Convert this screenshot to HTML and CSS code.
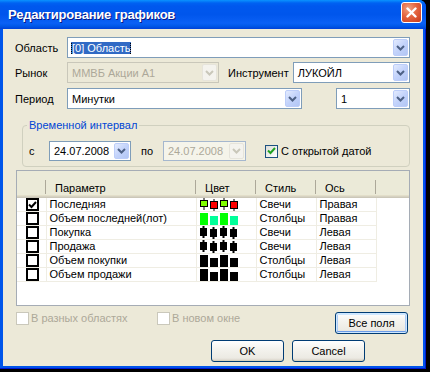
FILE: index.html
```html
<!DOCTYPE html>
<html lang="ru">
<head>
<meta charset="utf-8">
<title>Редактирование графиков</title>
<link rel="stylesheet" href="styles.css">
</head>
<body>
<div class="window">
<div class="titlebar">
<span class="title">Редактирование графиков</span>
<span class="close"><svg width="11" height="11" viewBox="0 0 11 11"><path d="M1.5 1.5l8 8M9.5 1.5l-8 8" stroke="#fff" stroke-width="2.4" stroke-linecap="round"/></svg></span>
</div>
<div class="client">

<div class="row r1">
<span class="lbl">Область</span>
<div class="combo grow"><span class="val"><span class="sel">[0] Область</span></span><span class="drop"><svg width="9" height="6" viewBox="0 0 9 6"><path d="M1 1l3.5 3.5L8 1" fill="none" stroke="#4d6185" stroke-width="2"/></svg></span></div>
</div>

<div class="row r2">
<span class="lbl">Рынок</span>
<div class="combo off w-market"><span class="val">ММВБ Акции А1</span><span class="drop"><svg width="9" height="6" viewBox="0 0 9 6"><path d="M1 1l3.5 3.5L8 1" fill="none" stroke="#c9c7ba" stroke-width="2"/></svg></span></div>
<span class="lbl2">Инструмент</span>
<div class="combo grow"><span class="val">ЛУКОЙЛ</span><span class="drop"><svg width="9" height="6" viewBox="0 0 9 6"><path d="M1 1l3.5 3.5L8 1" fill="none" stroke="#4d6185" stroke-width="2"/></svg></span></div>
</div>

<div class="row r3">
<span class="lbl">Период</span>
<div class="combo w-period"><span class="val">Минутки</span><span class="drop"><svg width="9" height="6" viewBox="0 0 9 6"><path d="M1 1l3.5 3.5L8 1" fill="none" stroke="#4d6185" stroke-width="2"/></svg></span></div>
<div class="combo w-num"><span class="val">1</span><span class="drop"><svg width="9" height="6" viewBox="0 0 9 6"><path d="M1 1l3.5 3.5L8 1" fill="none" stroke="#4d6185" stroke-width="2"/></svg></span></div>
</div>

<fieldset class="group">
<legend>Временной интервал</legend>
<div class="row dates">
<span class="from">с</span>
<div class="combo date"><span class="val">24.07.2008</span><span class="drop"><svg width="9" height="6" viewBox="0 0 9 6"><path d="M1 1l3.5 3.5L8 1" fill="none" stroke="#4d6185" stroke-width="2"/></svg></span></div>
<span class="to">по</span>
<div class="combo date off"><span class="val">24.07.2008</span><span class="drop"><svg width="9" height="6" viewBox="0 0 9 6"><path d="M1 1l3.5 3.5L8 1" fill="none" stroke="#c9c7ba" stroke-width="2"/></svg></span></div>
<span class="xpcheck"><svg width="9" height="8" viewBox="0 0 9 8"><path d="M1 3.5l2.5 2.5L8 1" fill="none" stroke="#21a121" stroke-width="2"/></svg></span>
<span class="checktext">С открытой датой</span>
</div>
</fieldset>

<div class="list">
<table>
<colgroup><col class="c-chk"><col class="c-name"><col class="c-color"><col class="c-style"><col class="c-axis"><col></colgroup>
<thead>
<tr><th></th><th>Параметр</th><th>Цвет</th><th>Стиль</th><th>Ось</th><th class="fill"></th></tr>
</thead>
<tbody>
<tr>
<td class="chk"><span class="box"><svg width="9" height="8" viewBox="0 0 9 8"><path d="M1 3.5l2.5 2.5L8 1" fill="none" stroke="#000" stroke-width="2"/></svg></span></td>
<td>Последняя</td>
<td class="sw"><svg width="40" height="13" viewBox="0 0 40 13">
<path d="M4 0v12M14 1v12M24 0v12M34 1v12" stroke="#000"/>
<rect x="0.5" y="2.5" width="7" height="6" fill="#80ff00" stroke="#000"/>
<rect x="10.5" y="3.5" width="7" height="7" fill="#ff0000" stroke="#000"/>
<rect x="20.5" y="2.5" width="7" height="6" fill="#80ff00" stroke="#000"/>
<rect x="30.5" y="3.5" width="7" height="7" fill="#ff0000" stroke="#000"/>
</svg></td>
<td>Свечи</td><td>Правая</td><td class="fill"></td>
</tr>
<tr>
<td class="chk"><span class="box"></span></td>
<td>Объем последней(лот)</td>
<td class="sw"><svg width="40" height="13" viewBox="0 0 40 13">
<rect x="0" y="1" width="8" height="12" fill="#00ff00"/>
<rect x="10" y="4" width="8" height="9" fill="#00ff99"/>
<rect x="20" y="1" width="8" height="12" fill="#00ff00"/>
<rect x="30" y="4" width="8" height="9" fill="#00ff99"/>
</svg></td>
<td>Столбцы</td><td>Правая</td><td class="fill"></td>
</tr>
<tr>
<td class="chk"><span class="box"></span></td>
<td>Покупка</td>
<td class="sw"><svg width="40" height="13" viewBox="0 0 40 13">
<path d="M3.5 0v12M13.5 1v12M23.5 0v12M33.5 1v12" stroke="#000" stroke-width="2"/>
<rect x="0" y="2" width="7" height="8"/>
<rect x="10" y="3" width="7" height="8"/>
<rect x="20" y="2" width="7" height="8"/>
<rect x="30" y="3" width="7" height="8"/>
</svg></td>
<td>Свечи</td><td>Левая</td><td class="fill"></td>
</tr>
<tr>
<td class="chk"><span class="box"></span></td>
<td>Продажа</td>
<td class="sw"><svg width="40" height="13" viewBox="0 0 40 13">
<path d="M3.5 0v12M13.5 1v12M23.5 0v12M33.5 1v12" stroke="#000" stroke-width="2"/>
<rect x="0" y="2" width="7" height="8"/>
<rect x="10" y="3" width="7" height="8"/>
<rect x="20" y="2" width="7" height="8"/>
<rect x="30" y="3" width="7" height="8"/>
</svg></td>
<td>Свечи</td><td>Левая</td><td class="fill"></td>
</tr>
<tr>
<td class="chk"><span class="box"></span></td>
<td>Объем покупки</td>
<td class="sw"><svg width="40" height="13" viewBox="0 0 40 13">
<rect x="0" y="1" width="8" height="12"/>
<rect x="10" y="4" width="8" height="9"/>
<rect x="20" y="1" width="8" height="12"/>
<rect x="30" y="4" width="8" height="9"/>
</svg></td>
<td>Столбцы</td><td>Левая</td><td class="fill"></td>
</tr>
<tr>
<td class="chk"><span class="box"></span></td>
<td>Объем продажи</td>
<td class="sw"><svg width="40" height="13" viewBox="0 0 40 13">
<rect x="0" y="1" width="8" height="12"/>
<rect x="10" y="4" width="8" height="9"/>
<rect x="20" y="1" width="8" height="12"/>
<rect x="30" y="4" width="8" height="9"/>
</svg></td>
<td>Столбцы</td><td>Левая</td><td class="fill"></td>
</tr>
</tbody>
</table>
</div>

<div class="row opts">
<span class="dimcheck"></span><span class="dimtext t1">В разных областях</span>
<span class="dimcheck"></span><span class="dimtext">В новом окне</span>
<button class="btn default all">Все поля</button>
</div>

<div class="row actions">
<button class="btn">OK</button>
<button class="btn">Cancel</button>
</div>

</div>
</div>
</body>
</html>
```

FILE: styles.css
```css
html, body {
  margin: 0;
  background: #000;
}
body {
  width: 430px;
  height: 372px;
  overflow: hidden;
  font: 11px "Liberation Sans", Arial, sans-serif;
  color: #000;
}
.window {
  width: 426px;
  height: 369px;
  display: flex;
  flex-direction: column;
  background: #0055ea;
  box-shadow: inset -1px -1px 0 #0019cf;
  border-top-right-radius: 7px;
}
.titlebar {
  height: 29px;
  display: flex;
  justify-content: space-between;
  align-items: flex-start;
  padding: 2px 4px 0 8px;
  box-sizing: border-box;
  background: linear-gradient(#0a93ff 0, #0062f2 3px, #0058ee 6px, #0056ec 50%, #0a60f5 80%, #0058e8 90%, #0040d8 100%);
  border-top-right-radius: 7px;
}
.title {
  margin-top: 5px;
  color: #fff;
  font: bold 13px "Liberation Sans", Arial, sans-serif;
  letter-spacing: -0.2px;
  text-shadow: 1px 1px 0 #0a1883;
}
.close {
  width: 21px;
  height: 21px;
  box-sizing: border-box;
  border: 1px solid #fff;
  border-radius: 3px;
  display: flex;
  align-items: center;
  justify-content: center;
  background: radial-gradient(circle at 35% 30%, #f0a383, #e4643f 45%, #c8391a);
}
.client {
  flex: 1;
  margin: 0 3px 3px;
  background: #ece9d8;
  padding: 0 13px 0 12px;
  display: flex;
  flex-direction: column;
}
.row {
  display: flex;
  align-items: center;
}
.r1 { margin-top: 8px; }
.r2 { margin-top: 4px; }
.r3 { margin-top: 5px; }
.lbl {
  width: 52px;
  flex: none;
}
.lbl2 {
  margin: 0 4px 0 9px;
}
.combo {
  height: 21px;
  box-sizing: border-box;
  border: 1px solid #7f9db9;
  background: #fff;
  display: flex;
  align-items: center;
  padding: 1px;
}
.combo .val {
  flex: 1;
  padding-left: 3px;
  white-space: nowrap;
  overflow: hidden;
}
.combo .sel {
  background: #316ac5;
  color: #fff;
  padding: 1px 1px 2px;
  margin-left: -1px;
  outline: 1px dotted #000;
  outline-offset: -1px;
}
.drop {
  width: 15px;
  height: 17px;
  box-sizing: border-box;
  border: 1px solid #bccdf9;
  border-radius: 2px;
  background: linear-gradient(135deg, #e3ebfe, #c3d3fb 50%, #b2c6f4);
  display: flex;
  align-items: center;
  justify-content: center;
}
.combo.off {
  background: #ece9d8;
  border-color: #c9c7ba;
  color: #aca899;
}
.combo.off .drop {
  background: #f4f3ee;
  border-color: #e6e4db;
}
.grow { flex: 1; }
.w-market { width: 152px; }
.w-period { width: 235px; }
.w-num { width: 74px; margin-left: 34px; }
.group {
  margin: 10px 0 0 7px;
  padding: 0 6px 5px;
  border: 1px solid #d0d0bf;
  border-radius: 4px;
}
.group legend {
  color: #0046d5;
  padding: 0 2px;
  margin-left: -2px;
  line-height: 13px;
}
.dates {
  margin-top: 9px;
}
.from {
  width: 20px;
  flex: none;
}
.to {
  width: 22px;
  margin-left: 10px;
  flex: none;
}
.combo.date {
  width: 82px;
  height: 20px;
}
.combo.date .drop { height: 16px; }
.combo.date.off {
  width: 83px;
  background: #f5f4ea;
  border-color: #a5b7ce;
}
.xpcheck {
  width: 13px;
  height: 13px;
  box-sizing: border-box;
  margin-left: 19px;
  border: 1px solid #1c5180;
  background: linear-gradient(135deg, #dcdcd7, #fff);
  display: flex;
  align-items: center;
  justify-content: center;
}
.checktext { margin-left: 3px; }
.list {
  margin: 3px 0 0 1px;
  height: 136px;
  box-sizing: border-box;
  border: 1px solid #a5acb5;
  background: #fff;
  overflow: hidden;
}
table {
  border-collapse: collapse;
  table-layout: fixed;
  width: 100%;
}
.c-chk { width: 29px; }
.c-name { width: 150px; }
.c-color, .c-style, .c-axis { width: 60px; }
th {
  height: 20px;
  padding: 7px 0 0 9px;
  text-align: left;
  font-weight: normal;
  background: linear-gradient(#aca899, #aca899) no-repeat right bottom 4px / 1px 14px, #ebead8;
  box-shadow: inset 0 -1px #cbc7b8, inset 0 -2px #d6d2c2, inset 0 -3px #e2dec9;
}
th.fill { background: #ebead8; }
td {
  height: 13px;
  padding: 0 0 0 3px;
  border: 1px solid #efede3;
  white-space: nowrap;
  overflow: hidden;
  line-height: 13px;
}
td.fill { border: 0; }
tbody tr:first-child td { border-top: 0; }
td:first-child { border-left: 0; }
td.chk {
  padding: 0 0 0 9px;
}
.box {
  width: 13px;
  height: 13px;
  box-sizing: border-box;
  border: 2px solid #000;
  display: flex;
  align-items: center;
  justify-content: center;
  background: #fff;
}
td.sw svg { display: block; }
.opts {
  margin-top: 6px;
  align-items: flex-start;
}
.dimcheck {
  width: 13px;
  height: 13px;
  box-sizing: border-box;
  margin-left: 1px;
  border: 1px solid #cac8bb;
  background: #fff;
}
.dimtext {
  color: #aca899;
  margin-left: 2px;
  line-height: 13px;
}
.t1 { width: 125px; }
.btn {
  width: 73px;
  height: 22px;
  padding: 0;
  font: inherit;
  color: #000;
  border: 1px solid #003c74;
  border-radius: 3px;
  background: linear-gradient(#fff, #f4f3ee 40%, #eceae3 85%, #d6d0c5);
  box-shadow: inset 0 -1px #d8d2bd;
}
.btn.default {
  box-shadow: inset 0 0 0 1px #cee7ff, inset 0 -2px #6b9be8, inset 0 2px #cee7ff, inset 2px 0 #aeccf5, inset -2px 0 #aeccf5;
}
.all { margin-left: auto; margin-right: 2px; }
.actions {
  margin-top: 6px;
  justify-content: flex-end;
  gap: 8px;
  padding-right: 45px;
}
```
